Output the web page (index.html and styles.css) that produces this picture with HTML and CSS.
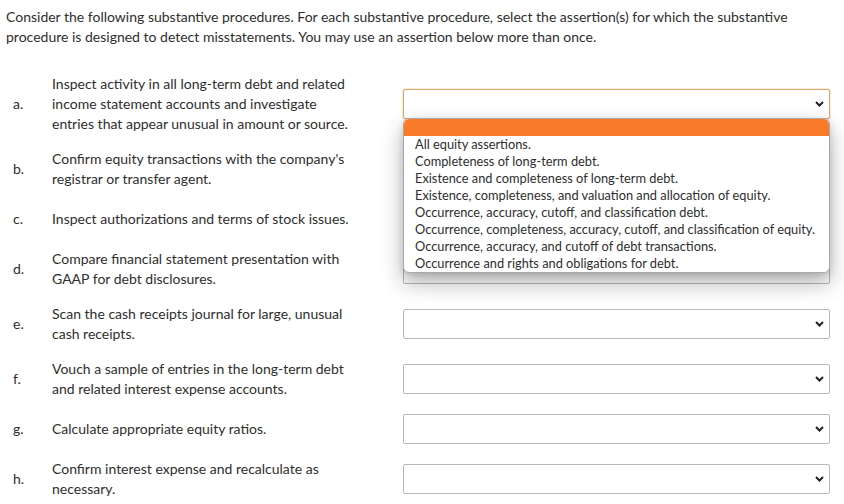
FILE: index.html
```html
<!DOCTYPE html>
<html lang="en">
<head>
  <meta charset="UTF-8" />
  <title>Substantive Procedures</title>
  <link rel="stylesheet" href="styles.css">
</head>
<body>
  <p class="intro">Consider the following substantive procedures. For each substantive procedure, select the assertion(s) for which the substantive procedure is designed to detect misstatements. You may use an assertion below more than once.</p>

  <div class="items">
    <div class="item">
      <span class="letter">a.</span>
      <span class="text">Inspect activity in all long-term debt and related income statement accounts and investigate entries that appear unusual in amount or source.</span>
      <div class="pick">
        <div class="select focus">
          <svg class="chev" width="9" height="6" viewBox="0 0 9 6"><path d="M1 1l3.5 3.5L8 1" fill="none" stroke="#222" stroke-width="2"/></svg>
        </div>
        <ul class="listbox">
          <li class="hl"></li>
          <li>All equity assertions.</li>
          <li>Completeness of long-term debt.</li>
          <li>Existence and completeness of long-term debt.</li>
          <li>Existence, completeness, and valuation and allocation of equity.</li>
          <li>Occurrence, accuracy, cutoff, and classification debt.</li>
          <li>Occurrence, completeness, accuracy, cutoff, and classification of equity.</li>
          <li>Occurrence, accuracy, and cutoff of debt transactions.</li>
          <li>Occurrence and rights and obligations for debt.</li>
        </ul>
      </div>
    </div>

    <div class="item">
      <span class="letter">b.</span>
      <span class="text">Confirm equity transactions with the company's registrar or transfer agent.</span>
      <div class="pick">
        <div class="select">
          <svg class="chev" width="9" height="6" viewBox="0 0 9 6"><path d="M1 1l3.5 3.5L8 1" fill="none" stroke="#222" stroke-width="2"/></svg>
        </div>
      </div>
    </div>

    <div class="item">
      <span class="letter">c.</span>
      <span class="text">Inspect authorizations and terms of stock issues.</span>
      <div class="pick">
        <div class="select">
          <svg class="chev" width="9" height="6" viewBox="0 0 9 6"><path d="M1 1l3.5 3.5L8 1" fill="none" stroke="#222" stroke-width="2"/></svg>
        </div>
      </div>
    </div>

    <div class="item">
      <span class="letter">d.</span>
      <span class="text">Compare financial statement presentation with GAAP for debt disclosures.</span>
      <div class="pick">
        <div class="select">
          <svg class="chev" width="9" height="6" viewBox="0 0 9 6"><path d="M1 1l3.5 3.5L8 1" fill="none" stroke="#222" stroke-width="2"/></svg>
        </div>
      </div>
    </div>

    <div class="item">
      <span class="letter">e.</span>
      <span class="text">Scan the cash receipts journal for large, unusual cash receipts.</span>
      <div class="pick">
        <div class="select">
          <svg class="chev" width="9" height="6" viewBox="0 0 9 6"><path d="M1 1l3.5 3.5L8 1" fill="none" stroke="#222" stroke-width="2"/></svg>
        </div>
      </div>
    </div>

    <div class="item">
      <span class="letter">f.</span>
      <span class="text">Vouch a sample of entries in the long-term debt and related interest expense accounts.</span>
      <div class="pick">
        <div class="select">
          <svg class="chev" width="9" height="6" viewBox="0 0 9 6"><path d="M1 1l3.5 3.5L8 1" fill="none" stroke="#222" stroke-width="2"/></svg>
        </div>
      </div>
    </div>

    <div class="item">
      <span class="letter">g.</span>
      <span class="text">Calculate appropriate equity ratios.</span>
      <div class="pick">
        <div class="select">
          <svg class="chev" width="9" height="6" viewBox="0 0 9 6"><path d="M1 1l3.5 3.5L8 1" fill="none" stroke="#222" stroke-width="2"/></svg>
        </div>
      </div>
    </div>

    <div class="item">
      <span class="letter">h.</span>
      <span class="text">Confirm interest expense and recalculate as necessary.</span>
      <div class="pick">
        <div class="select">
          <svg class="chev" width="9" height="6" viewBox="0 0 9 6"><path d="M1 1l3.5 3.5L8 1" fill="none" stroke="#222" stroke-width="2"/></svg>
        </div>
      </div>
    </div>
  </div>
</body>
</html>
```

FILE: styles.css
```css
body {
  margin: 0;
  padding: 7px 0 0 6px;
  font-family: Lato, "Open Sans", sans-serif;
  font-size: 14px;
  color: #2e2e2e;
  background: white;
}
.intro {
  margin: 0;
  line-height: 20px;
  max-width: 820px;
}
.items {
  display: flex;
  flex-direction: column;
  gap: 15px;
  margin-top: 27px;
  margin-left: -6px;
}
.item {
  display: grid;
  grid-template-columns: 52px 351px 427px;
  align-items: center;
  line-height: 20px;
}
.item .letter {
  padding-left: 13px;
}
.item .text {
  max-width: 310px;
}
.pick {
  position: relative;
}
.select {
  height: 30px;
  box-sizing: border-box;
  border: 1px solid #b8b8b8;
  border-radius: 2px;
  background: white;
  display: flex;
  align-items: center;
  justify-content: flex-end;
  padding-right: 5px;
}
.select.focus {
  border-color: #dca36c;
  box-shadow: 0 0 0 1px rgba(250, 170, 90, 0.2);
}
.listbox {
  position: absolute;
  top: 29px;
  left: 0;
  right: 0;
  z-index: 5;
  margin: 0;
  padding: 0;
  list-style: none;
  background: white;
  border: 1px solid #a8a8a8;
  border-radius: 6px;
  box-shadow: 0 10px 22px rgba(0, 0, 0, 0.3), 0 2px 6px rgba(0, 0, 0, 0.12);
  font-size: 12.8px;
  line-height: 17px;
  overflow: hidden;
}
.listbox li {
  height: 17px;
  padding-left: 11px;
  white-space: nowrap;
}
.listbox li.hl {
  background: #f97a29;
  border-radius: 5px 5px 0 0;
}
```
